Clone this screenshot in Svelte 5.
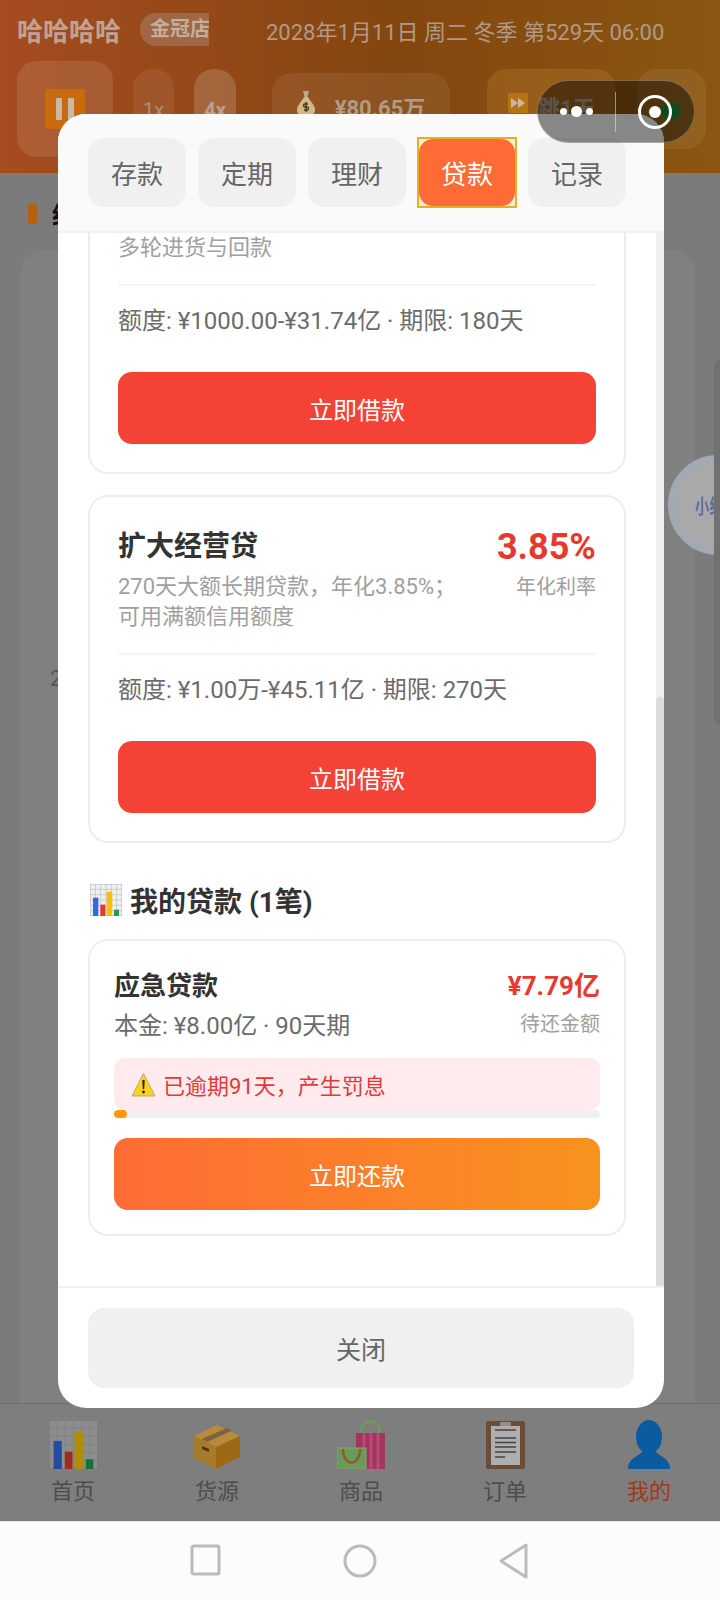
<script>
  const tabs = ['存款', '定期', '理财', '贷款', '记录'];
  const navItems = [
    { key: 'chart', label: '首页' },
    { key: 'box', label: '货源' },
    { key: 'bags', label: '商品' },
    { key: 'clip', label: '订单' },
    { key: 'user', label: '我的' }
  ];
</script>

{#snippet chart()}
  <svg class="chart" viewBox="0 0 48 48">
    <rect class="chart-bg" width="48" height="48" stroke="#9a9a9a" />
    <path d="M8 0V48M16 0V48M24 0V48M32 0V48M40 0V48M0 8H48M0 16H48M0 24H48M0 32H48M0 40H48" stroke="#b0b0b0" stroke-width="0.8" />
    <rect x="4.500" y="20.500" width="8" height="27.500" fill="#2f6bdc" />
    <rect x="15.500" y="31" width="7.500" height="17" fill="#e23a2e" />
    <rect x="25" y="11.500" width="8.500" height="36.500" fill="#f4c20d" />
    <rect x="36" y="38.500" width="7.500" height="9.500" fill="#1f9d55" />
  </svg>
{/snippet}

<div class="page">
  <header class="top">
    <div class="top-row">
      <span class="shop">哈哈哈哈</span>
      <span class="badge"><span>金冠店</span></span>
      <span class="date">2028年1月11日 周二 冬季 第529天 06:00</span>
    </div>
    <div class="controls">
      <div class="ctl pause">
        <svg width="40" height="40" viewBox="0 0 40 40">
          <rect width="40" height="40" rx="2" fill="#c96a0f" />
          <rect x="11" y="9" width="6" height="22" rx="1" fill="#c8b8a8" />
          <rect x="23" y="9" width="6" height="22" rx="1" fill="#c8b8a8" />
        </svg>
      </div>
      <div class="ctl speed">1x</div>
      <div class="ctl speed on">4x</div>
      <div class="ctl money">
        <svg width="18" height="26" viewBox="0 0 18 26">
          <path d="M6 1h6l-1.500 6h-3z" fill="#b8a890" />
          <path d="M7 7h4c2 4 7 8 7 13 0 4-3 6-9 6s-9-2-9-6C0 15 5 11 7 7z" fill="#d0b888" />
          <path d="M9 12v10M11 14H8a1.500 1.500 0 0 0 0 3h2a1.500 1.500 0 0 1 0 3H7" stroke="#4a3a20" stroke-width="1.400" fill="none" />
        </svg>
        <span>¥80.65万</span>
      </div>
      <div class="ctl skip">
        <svg width="20" height="20" viewBox="0 0 20 20">
          <rect width="20" height="20" rx="2" fill="#b87412" />
          <path d="M3 5l7 5-7 5zM10 5l7 5-7 5z" fill="#c8b8a8" />
        </svg>
        <span>跳1天</span>
      </div>
      <div class="ctl next"><i></i></div>
    </div>
  </header>

  <main class="behind">
    <div class="sec-title"><i></i><span>经营</span></div>
    <div class="behind-card"><span class="stray">2</span></div>
  </main>

  <nav class="tabbar">
    {#each navItems as item (item.key)}
      <div class="nav-item" class:active={item.key === 'user'}>
        <div class="nav-icon">
          {#if item.key === 'chart'}
            {@render chart()}
          {:else if item.key === 'box'}
            <svg width="46" height="44" viewBox="0 0 46 44">
              <path d="M23 0L46 11 22 22 0 11z" fill="#b98a3c" />
              <path d="M0 11L22 22V44L0 33z" fill="#a87a2c" />
              <path d="M22 22L46 11V32L22 44z" fill="#9c6a14" />
              <path d="M8 14L33 3l5 2.500L13 17z" fill="#7c6240" />
              <path d="M8 21l7 3v3l-7-3z" fill="#4a3418" />
            </svg>
          {:else if item.key === 'bags'}
            <svg width="48" height="49" viewBox="0 0 48 49">
              <path d="M24.500 15V9a9 7.500 0 0 1 18 0V15" fill="none" stroke="#6f9a5c" stroke-width="2.500" />
              <rect x="19" y="13" width="29" height="36" fill="#a03662" />
              <path d="M27 13V49M34 13V49M41 13V49" stroke="#b84a74" stroke-width="3" />
              <rect x="0" y="28" width="29" height="21" fill="#6a9a58" stroke="#80a86c" />
              <path d="M6 29c0 18 17 18 17 0" fill="none" stroke="#8f5a2e" stroke-width="2.500" />
            </svg>
          {:else if item.key === 'clip'}
            <svg width="39" height="48" viewBox="0 0 39 48">
              <rect width="39" height="48" rx="2" fill="#6b4c34" />
              <rect x="5" y="5" width="29" height="39" fill="#aeaeae" />
              <rect x="14" y="1" width="11" height="4" rx="1" fill="#8f8f8f" />
              <path d="M9 9H30M9 17H30M9 21.500H30M9 26H30M9 31H30M9 36H19" stroke="#444" stroke-width="1.600" />
            </svg>
          {:else}
            <svg width="42" height="49" viewBox="0 0 42 49">
              <ellipse cx="21" cy="17" rx="13" ry="17" fill="#0b5ba0" />
              <path d="M0 49C0 38 10 37 15 31H27C32 37 42 38 42 49z" fill="#0b5ba0" />
            </svg>
          {/if}
        </div>
        <span>{item.label}</span>
      </div>
    {/each}
  </nav>

  <div class="sysnav">
    <svg width="34" height="36" viewBox="0 0 34 36"><rect x="3" y="3" width="27" height="28" rx="2" fill="none" stroke="#bbb" stroke-width="3" /></svg>
    <svg width="36" height="36" viewBox="0 0 36 36"><circle cx="18" cy="18" r="15" fill="none" stroke="#bbb" stroke-width="3" /></svg>
    <svg width="34" height="36" viewBox="0 0 34 36"><path d="M29 2V34L4 18z" fill="none" stroke="#bbb" stroke-width="3" stroke-linejoin="round" /></svg>
  </div>

  <div class="ball"><span>小红</span></div>
  <div class="edge-strip"></div>

  <section class="modal">
    <div class="tabs">
      {#each tabs as tab (tab)}
        <button class="tab" class:active={tab === '贷款'}>{tab}</button>
      {/each}
    </div>

    <div class="body">
      <div class="scroll">
        <div class="card cut">
          <p class="desc">多轮进货与回款</p>
          <div class="line"></div>
          <p class="limit">额度: ¥1000.00-¥31.74亿 · 期限: 180天</p>
          <button class="borrow">立即借款</button>
        </div>

        <div class="card">
          <div class="card-head">
            <div>
              <h3>扩大经营贷</h3>
              <p class="desc wrap">270天大额长期贷款，年化3.85%；可用满额信用额度</p>
            </div>
            <div class="rate">
              <strong>3.85%</strong>
              <small>年化利率</small>
            </div>
          </div>
          <div class="line"></div>
          <p class="limit">额度: ¥1.00万-¥45.11亿 · 期限: 270天</p>
          <button class="borrow">立即借款</button>
        </div>

        <h2 class="mine">{@render chart()}<span>我的贷款 (1笔)</span></h2>

        <div class="card loan">
          <div class="loan-head">
            <div>
              <h4>应急贷款</h4>
              <p>本金: ¥8.00亿 · 90天期</p>
            </div>
            <div class="owed">
              <strong>¥7.79亿</strong>
              <small>待还金额</small>
            </div>
          </div>
          <div class="warn">
            <svg width="25" height="25" viewBox="0 0 25 25">
              <path d="M12.500 1.500L24 24H1z" fill="#ffd21f" stroke="#a89a70" stroke-width="0.800" stroke-linejoin="round" />
              <path d="M11.300 8h2.400l-.5 9h-1.400z" fill="#222" />
              <circle cx="12.500" cy="20" r="1.400" fill="#222" />
            </svg>
            <span>已逾期91天，产生罚息</span>
          </div>
          <div class="progress"><div class="fill" style="width: 2.7%"></div></div>
          <button class="repay">立即还款</button>
        </div>
      </div>
      <div class="bar"><i></i></div>
    </div>

    <div class="foot"><button class="close">关闭</button></div>
  </section>

  <div class="capsule">
    <div class="dots"><i></i><i class="big"></i><i></i></div>
    <span class="sep"></span>
    <div class="ring"><i></i></div>
  </div>
</div>

<style>
  :global(body) {
    margin: 0;
    font-family: Roboto, "Noto Sans CJK SC", sans-serif;
  }

  .page {
    position: relative;
    width: 720px;
    height: 1600px;
    overflow: hidden;
    display: flex;
    flex-direction: column;
    background: #7b7b7b;
  }

  p, h2, h3, h4 {
    margin: 0;
  }

  button {
    border: none;
    font-family: inherit;
    display: block;
  }

  /* header, already dimmed by the sheet */
  .top {
    height: 173px;
    flex: none;
    box-sizing: border-box;
    padding: 13px 15px 0 17px;
    background: linear-gradient(90deg, #a64c20, #84460f 55%, #8a5610);
  }

  .top-row {
    display: flex;
    align-items: center;
    height: 33px;
  }

  .shop {
    font-size: 26px;
    font-weight: 700;
    color: #bfa392;
    width: 123px;
  }

  .badge {
    width: 69px;
    height: 33px;
    box-sizing: border-box;
    padding-left: 10px;
    background: #a06646;
    border-radius: 16px 0 0 16px;
    overflow: hidden;
    font-size: 20px;
    font-weight: 700;
    line-height: 33px;
    color: #c4ae9c;
    white-space: nowrap;
  }

  .date {
    margin-left: 57px;
    font-size: 22px;
    color: #b09a85;
    white-space: nowrap;
  }

  .controls {
    display: flex;
    margin-top: 15px;
    height: 100px;
    position: relative;
  }

  .ctl {
    flex: none;
    border-radius: 20px;
    background: rgba(255, 255, 255, 0.07);
    color: #a8917a;
    font-size: 20px;
    display: flex;
    justify-content: center;
    box-sizing: border-box;
  }

  .pause {
    width: 96px;
    height: 96px;
    align-items: center;
    margin-right: 20px;
    background: rgba(255, 255, 255, 0.1);
  }

  .speed {
    width: 41px;
    height: 80px;
    margin-top: 8px;
    margin-right: 20px;
    padding-top: 29px;
  }

  .speed.on {
    width: 42px;
    font-weight: 700;
    margin-right: 36px;
    background: rgba(255, 255, 255, 0.16);
    color: #b8a18c;
  }

  .money {
    width: 178px;
    height: 80px;
    margin-top: 12px;
    margin-right: 37px;
    padding-top: 17px;
    gap: 20px;
    font-size: 22px;
    font-weight: 700;
    color: #b09c86;
  }

  .skip {
    width: 129px;
    height: 80px;
    margin-top: 8px;
    margin-right: 21px;
    padding-top: 21px;
    gap: 10px;
    font-size: 22px;
    font-weight: 700;
    background: rgba(255, 190, 90, 0.14);
    color: #a89a8c;
  }

  .skip svg {
    margin-top: 3px;
  }

  .next {
    width: 69px;
    height: 80px;
    margin-top: 8px;
    position: relative;
  }

  .next i {
    position: absolute;
    left: 24px;
    top: 33px;
    width: 20px;
    height: 18px;
    border-radius: 50%;
    background: #1c8a30;
  }

  /* page behind the sheet */
  .behind {
    flex: 1;
    box-sizing: border-box;
    padding: 30px 25px 0 20px;
    display: flex;
    flex-direction: column;
  }

  .sec-title {
    display: flex;
    align-items: center;
    gap: 15px;
    margin-left: 8px;
    height: 21px;
    font-size: 24px;
    font-weight: 700;
    color: #111;
  }

  .sec-title i {
    width: 9px;
    height: 21px;
    border-radius: 4px;
    background: #b85f0f;
  }

  .behind-card {
    flex: 1;
    margin-top: 26px;
    padding: 416px 0 0 30px;
    background: #808080;
    border-radius: 22px 22px 0 0;
    font-size: 22px;
    color: #555;
  }

  .tabbar {
    flex: none;
    height: 118px;
    display: grid;
    grid-template-columns: repeat(5, 144px);
    padding-left: 1px;
    background: #7e7e7e;
    border-top: 1px solid #6e6e6e;
    box-sizing: border-box;
  }

  .nav-item {
    display: flex;
    flex-direction: column;
    align-items: center;
    font-size: 22px;
    color: #4d4d4d;
  }

  .nav-item.active {
    color: #a2391a;
  }

  .nav-icon {
    height: 49px;
    margin-top: 16px;
    margin-bottom: 4px;
    display: flex;
    align-items: flex-end;
  }

  .nav-icon .chart {
    width: 49px;
    height: 49px;
    display: block;
    filter: brightness(0.72);
  }

  .nav-icon .chart-bg {
    fill: #c4c4c4;
  }

  .nav-icon :global(svg) {
    display: block;
  }

  .chart-bg {
    fill: #f0f0f0;
  }

  .sysnav {
    flex: none;
    height: 79px;
    background: #fcfcfc;
    display: grid;
    grid-template-columns: 34px 36px 34px;
    gap: 119px;
    justify-content: center;
    align-items: center;
    border-top: 1px solid #e6e6e6;
    box-sizing: border-box;
  }

  .sysnav svg {
    display: block;
  }

  .ball {
    position: absolute;
    left: 668px;
    top: 455px;
    width: 100px;
    height: 100px;
    box-sizing: border-box;
    border-radius: 50%;
    background: #a9a9a9;
    border: 8px solid #a3a9b3;
    font-size: 20px;
    font-weight: 700;
    color: #5c6f9e;
    padding: 28px 0 0 19px;
    white-space: nowrap;
  }

  .ball span {
    display: inline-block;
    transform: scaleX(0.72);
    transform-origin: left center;
  }

  .edge-strip {
    position: absolute;
    left: 714px;
    top: 360px;
    width: 6px;
    height: 365px;
    background: #717171;
    border-radius: 6px 0 0 6px;
  }

  /* sheet */
  .modal {
    position: absolute;
    left: 58px;
    top: 114px;
    width: 606px;
    height: 1294px;
    background: #fff;
    border-radius: 28px;
    overflow: hidden;
    display: flex;
    flex-direction: column;
  }

  .tabs {
    flex: none;
    height: 119px;
    box-sizing: border-box;
    padding: 24px 30px 0;
    display: flex;
    gap: 12px;
    background: #fafafa;
    border-bottom: 2px solid #f2f2f2;
  }

  .tab {
    width: 98px;
    height: 69px;
    border-radius: 16px;
    background: #f0f0f0;
    font-size: 26px;
    color: #666;
    padding: 0;
  }

  .tab.active {
    position: relative;
    isolation: isolate;
    width: 100px;
    height: 71px;
    margin: -1px;
    border: 2px solid #e8b020;
    border-radius: 0;
    background: #f7ecd2;
    color: #fff;
  }

  .tab.active::before {
    content: "";
    position: absolute;
    inset: 0;
    z-index: -1;
    border-radius: 14px;
    background: #ff6b35;
  }

  .body {
    flex: 1;
    min-height: 0;
    position: relative;
    overflow: hidden;
  }

  .scroll {
    padding: 0 30px;
    width: 598px;
    box-sizing: border-box;
    overflow: hidden;
    height: 100%;
  }

  .bar {
    position: absolute;
    right: 0;
    top: 0;
    bottom: 0;
    width: 8px;
    background: #f0f0f0;
  }

  .bar i {
    position: absolute;
    left: 0;
    right: 0;
    top: 464px;
    bottom: 0;
    background: #dcdcdc;
    border-radius: 4px 4px 0 0;
  }

  .card {
    box-sizing: border-box;
    width: 538px;
    border: 2px solid #eee;
    border-radius: 20px;
    padding: 30px 28px 28px;
    margin-bottom: 21px;
  }

  .card.cut {
    margin-top: -42px;
    padding-top: 40px;
  }

  .card h3 {
    font-size: 28px;
    line-height: 40px;
    font-weight: 700;
    color: #333;
  }

  .card-head {
    display: flex;
    justify-content: space-between;
  }

  .desc {
    font-size: 22px;
    line-height: 30px;
    color: #a0a0a0;
  }

  .desc.wrap {
    margin-top: 5px;
    max-width: 340px;
  }

  .rate {
    display: flex;
    flex-direction: column;
    align-items: flex-end;
  }

  .rate strong {
    font-size: 36px;
    line-height: 40px;
    color: #e8392f;
  }

  .rate small {
    margin-top: 5px;
    font-size: 20px;
    line-height: 30px;
    color: #a0a0a0;
  }

  .line {
    height: 2px;
    margin-top: 21px;
    background: #f5f5f5;
  }

  .limit {
    margin-top: 18px;
    font-size: 24px;
    line-height: 34px;
    color: #6b6b6b;
  }

  .borrow {
    width: 100%;
    height: 72px;
    margin-top: 34px;
    border-radius: 14px;
    background: #f44336;
    color: #fff;
    font-size: 24px;
  }

  .mine {
    display: flex;
    align-items: center;
    gap: 8px;
    height: 40px;
    margin-top: 37px;
    margin-bottom: 19px;
    font-size: 28px;
    font-weight: 700;
    color: #333;
  }

  .mine .chart {
    width: 32px;
    height: 32px;
    flex: none;
    margin-left: 2px;
  }

  .loan {
    padding: 25px 24px 24px;
  }

  .loan-head {
    display: flex;
    justify-content: space-between;
    height: 92px;
  }

  .loan h4 {
    font-size: 26px;
    line-height: 40px;
    font-weight: 700;
    color: #333;
  }

  .loan p {
    font-size: 24px;
    line-height: 40px;
    color: #6b6b6b;
  }

  .owed {
    display: flex;
    flex-direction: column;
    align-items: flex-end;
  }

  .owed strong {
    font-size: 26px;
    line-height: 40px;
    color: #e8392f;
  }

  .owed small {
    font-size: 20px;
    line-height: 36px;
    color: #a0a0a0;
  }

  .warn {
    height: 52px;
    box-sizing: border-box;
    padding-left: 17px;
    display: flex;
    align-items: center;
    gap: 7px;
    background: #ffebee;
    border-radius: 10px;
    font-size: 22px;
    color: #e53935;
  }

  .progress {
    height: 8px;
    border-radius: 4px;
    background: #f0f0f0;
    overflow: hidden;
  }

  .fill {
    height: 100%;
    border-radius: 4px;
    background: #ff9800;
  }

  .repay {
    width: 100%;
    height: 72px;
    margin-top: 20px;
    border-radius: 14px;
    background: linear-gradient(90deg, #ff6b35, #f7931e);
    color: #fff;
    font-size: 24px;
  }

  .foot {
    flex: none;
    height: 122px;
    box-sizing: border-box;
    padding: 20px 30px 0;
    border-top: 2px solid #f2f2f2;
  }

  .close {
    width: 546px;
    height: 80px;
    border-radius: 16px;
    background: #f0f0f0;
    color: #666;
    font-size: 25px;
  }

  /* wechat capsule */
  .capsule {
    position: absolute;
    left: 537px;
    top: 80px;
    width: 158px;
    height: 63px;
    box-sizing: border-box;
    border-radius: 32px;
    border: 1.5px solid rgba(255, 255, 255, 0.28);
    background: rgba(0, 0, 0, 0.46);
    display: flex;
    align-items: center;
  }

  .dots {
    width: 77px;
    box-sizing: border-box;
    padding-right: 22px;
    display: flex;
    align-items: center;
    justify-content: flex-end;
    gap: 4px;
  }

  .dots i {
    width: 7px;
    height: 7px;
    border-radius: 50%;
    background: #fff;
  }

  .dots i.big {
    width: 11px;
    height: 11px;
  }

  .sep {
    width: 1px;
    height: 40px;
    margin-right: 22px;
    background: rgba(255, 255, 255, 0.45);
  }

  .ring {
    width: 34px;
    height: 34px;
    box-sizing: border-box;
    border-radius: 50%;
    border: 3px solid #fff;
    display: flex;
    align-items: center;
    justify-content: center;
  }

  .ring i {
    width: 12px;
    height: 12px;
    border-radius: 50%;
    background: #fff;
  }
</style>
